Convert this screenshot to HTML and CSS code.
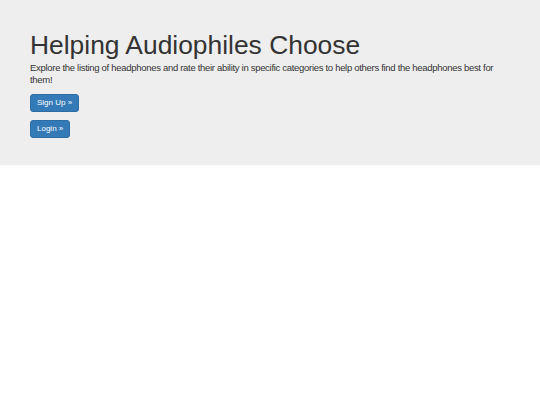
FILE: index.html
```html
<!DOCTYPE html>
<html>
<head>
<meta charset="utf-8">
<link rel="stylesheet" href="styles.css">
</head>
<body>
<div class="jumbotron">
  <h1 class="title">Helping Audiophiles Choose</h1>
  <p class="lead">Explore the listing of headphones and rate their ability in specific categories to help others find the headphones best for them!</p>
  <div class="actions">
    <a class="btn">Sign Up &raquo;</a>
    <a class="btn">Login &raquo;</a>
  </div>
</div>
</body>
</html>
```
FILE: styles.css
```css
html, body {
  margin: 0;
  padding: 0;
  background: #fff;
  font-family: "Liberation Sans", Arial, sans-serif;
  color: #333;
}
.jumbotron {
  background: #eeeeee;
  padding: 28px 30px 27px 30px;
  height: 110px;
}
.title {
  margin: 0;
  font-size: 26.4px;
  font-weight: 400;
  line-height: 34px;
}
.lead {
  margin: 0 0 8px 0;
  font-size: 9.5px;
  letter-spacing: -0.3px;
  line-height: 12px;
}
.actions {
  display: flex;
  flex-direction: column;
  align-items: flex-start;
  gap: 8px;
}
.btn {
  display: inline-block;
  background: #337ab7;
  border: 1px solid #2e6da4;
  border-radius: 3px;
  color: #fff;
  font-size: 8px;
  line-height: 12px;
  padding: 2px 6px;
  height: 12px;
}
```
